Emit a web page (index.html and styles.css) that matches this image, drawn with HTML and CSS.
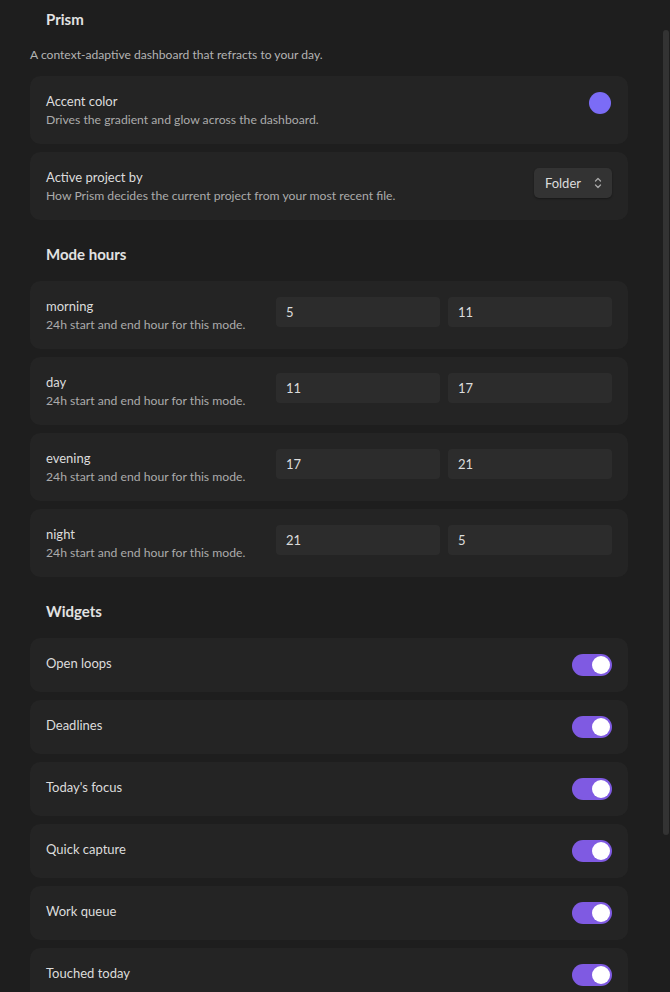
FILE: index.html
```html
<!DOCTYPE html>
<html lang="en">
<head>
<meta charset="utf-8">
<title>Prism settings</title>
<link rel="stylesheet" href="styles.css">
</head>
<body>
<main class="settings">
  <h2 class="section-title first">Prism</h2>
  <p class="intro">A context-adaptive dashboard that refracts to your day.</p>

  <div class="list">
    <div class="item">
      <div class="info">
        <div class="name">Accent color</div>
        <div class="desc">Drives the gradient and glow across the dashboard.</div>
      </div>
      <div class="control"><span class="swatch"></span></div>
    </div>
    <div class="item">
      <div class="info">
        <div class="name">Active project by</div>
        <div class="desc">How Prism decides the current project from your most recent file.</div>
      </div>
      <div class="control">
        <button class="select">Folder
          <svg class="chev" viewBox="0 0 10 14" width="10" height="14"><polyline points="2.5,5 5,2.5 7.5,5"/><polyline points="2.5,9 5,11.5 7.5,9"/></svg>
        </button>
      </div>
    </div>
  </div>

  <h2 class="section-title">Mode hours</h2>
  <div class="list">
    <div class="item">
      <div class="info"><div class="name">morning</div><div class="desc">24h start and end hour for this mode.</div></div>
      <div class="control hours"><input class="field" value="5"><input class="field" value="11"></div>
    </div>
    <div class="item">
      <div class="info"><div class="name">day</div><div class="desc">24h start and end hour for this mode.</div></div>
      <div class="control hours"><input class="field" value="11"><input class="field" value="17"></div>
    </div>
    <div class="item">
      <div class="info"><div class="name">evening</div><div class="desc">24h start and end hour for this mode.</div></div>
      <div class="control hours"><input class="field" value="17"><input class="field" value="21"></div>
    </div>
    <div class="item">
      <div class="info"><div class="name">night</div><div class="desc">24h start and end hour for this mode.</div></div>
      <div class="control hours"><input class="field" value="21"><input class="field" value="5"></div>
    </div>
  </div>

  <h2 class="section-title">Widgets</h2>
  <div class="list">
    <div class="item"><div class="info"><div class="name">Open loops</div></div><div class="control"><span class="toggle"></span></div></div>
    <div class="item"><div class="info"><div class="name">Deadlines</div></div><div class="control"><span class="toggle"></span></div></div>
    <div class="item"><div class="info"><div class="name">Today's focus</div></div><div class="control"><span class="toggle"></span></div></div>
    <div class="item"><div class="info"><div class="name">Quick capture</div></div><div class="control"><span class="toggle"></span></div></div>
    <div class="item"><div class="info"><div class="name">Work queue</div></div><div class="control"><span class="toggle"></span></div></div>
    <div class="item"><div class="info"><div class="name">Touched today</div></div><div class="control"><span class="toggle"></span></div></div>
  </div>
</main>
<div class="scroll-thumb"></div>
</body>
</html>
```
FILE: styles.css
```css
html, body {
  margin: 0;
  height: 100%;
  overflow: hidden;
  background: #1e1e1e;
}

body {
  font-family: "Lato", "Open Sans", sans-serif;
  color: #dadada;
  font-size: 13px;
}

.settings {
  width: 598px;
  margin-left: 30px;
}

.section-title {
  margin: 15px 0 0;
  padding: 8px 16px;
  font-size: 15px;
  line-height: 22px;
  font-weight: 700;
  color: #e2e2e2;
}

.section-title.first {
  margin-top: 0;
}

.section-title + .list {
  margin-top: 8px;
}

.intro {
  margin: 8px 0 12px;
  font-size: 12.1px;
  line-height: 18px;
  color: #b4b4b4;
}

.list {
  display: flex;
  flex-direction: column;
  gap: 8px;
}

.item {
  display: flex;
  align-items: flex-start;
  justify-content: space-between;
  background: #242424;
  border-radius: 10px;
  padding: 15px 16px;
}

.name {
  font-size: 13px;
  line-height: 20px;
  color: #dcdcdc;
}

.desc {
  font-size: 12.2px;
  line-height: 18px;
  color: #ababab;
}

.control {
  margin: 1px 0;
  display: flex;
  gap: 8px;
}

.swatch {
  display: block;
  width: 22px;
  height: 22px;
  margin-right: 1px;
  border-radius: 50%;
  background: #7b6cf6;
}

.select {
  display: flex;
  align-items: center;
  gap: 12px;
  height: 30px;
  padding: 0 9px 0 11px;
  border: none;
  border-radius: 5px;
  background: #333333;
  box-shadow: 0 1px 2px rgba(0, 0, 0, 0.35);
  font: inherit;
  font-size: 13px;
  color: #dcdcdc;
}

.chev {
  fill: none;
  stroke: #a8a8a8;
  stroke-width: 1.3;
  stroke-linecap: round;
  stroke-linejoin: round;
}

.field {
  box-sizing: border-box;
  width: 164px;
  height: 30px;
  padding: 0 10px;
  border: none;
  border-radius: 4px;
  background: #2c2c2c;
  font: inherit;
  font-size: 13px;
  color: #dcdcdc;
  outline: none;
}

.toggle {
  position: relative;
  display: block;
  width: 40px;
  height: 22px;
  border-radius: 11px;
  background: #7f5ae2;
}

.toggle::after {
  content: "";
  position: absolute;
  top: 2px;
  right: 2px;
  width: 18px;
  height: 18px;
  border-radius: 50%;
  background: #ffffff;
}

.scroll-thumb {
  position: fixed;
  top: 30px;
  right: 1px;
  width: 6px;
  height: 805px;
  border-radius: 3px;
  background: #333333;
}
```
